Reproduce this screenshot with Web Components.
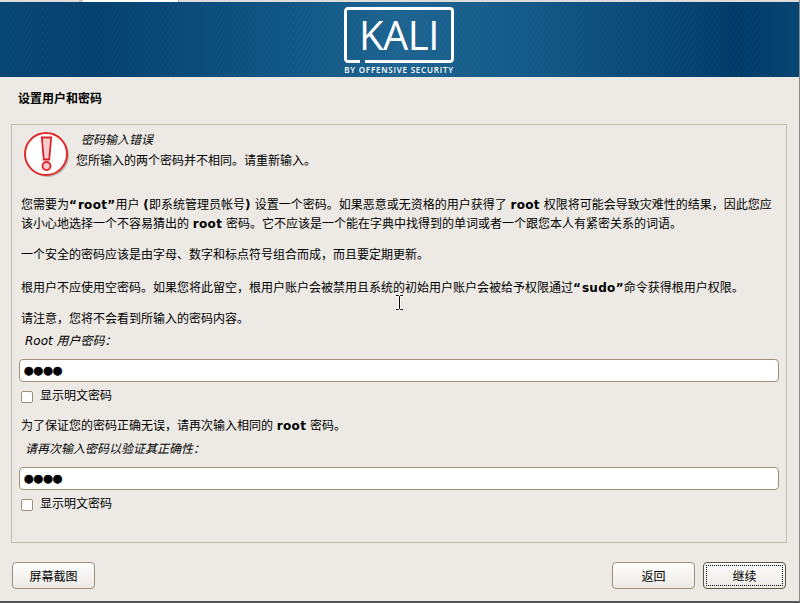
<!DOCTYPE html>
<html lang="zh">
<head>
<meta charset="utf-8">
<style>
  html, body { margin: 0; height: 100%; }
  body { overflow: hidden; font-family: "DejaVu Sans", "Noto Sans CJK SC", sans-serif; }
  b { letter-spacing: .3px; }
  b.open { letter-spacing: 1px; }
</style>
</head>
<body>
<kali-installer>
  <kali-banner slot="banner"></kali-banner>
  <span slot="title">设置用户和密码</span>

  <error-note heading="密码输入错误">您所输入的两个密码并不相同。请重新输入。</error-note>

  <info-text style="margin-top:14px">您需要为<b class="open">“</b><b>root”</b>用户 <b>(</b>即系统管理员帐号<b>)</b> 设置一个密码。如果恶意或无资格的用户获得了 <b>root</b> 权限将可能会导致灾难性的结果，因此您应该小心地选择一个不容易猜出的 <b>root</b> 密码。它不应该是一个能在字典中找得到的单词或者一个跟您本人有紧密关系的词语。</info-text>
  <info-text style="margin-top:12px">一个安全的密码应该是由字母、数字和标点符号组合而成，而且要定期更新。</info-text>
  <info-text style="margin-top:14px">根用户不应使用空密码。如果您将此留空，根用户账户会被禁用且系统的初始用户账户会被给予权限通过<b class="open">“</b><b>sudo”</b>命令获得根用户权限。</info-text>
  <info-text style="margin-top:12px">请注意，您将不会看到所输入的密码内容。</info-text>
  <password-field label="Root 用户密码：" style="margin-top:3px"></password-field>
  <info-text style="margin-top:12px">为了保证您的密码正确无误，请再次输入相同的 <b>root</b> 密码。</info-text>
  <password-field label="请再次输入密码以验证其正确性：" style="margin-top:4px"></password-field>

  <gtk-button slot="left">屏幕截图</gtk-button>
  <gtk-button slot="right">返回</gtk-button>
  <gtk-button slot="right" focused>继续</gtk-button>
</kali-installer>

<script>
class KaliInstaller extends HTMLElement {
  connectedCallback() {
    this.attachShadow({ mode: 'open' });
    this.shadowRoot.innerHTML = `
      <style>
        :host {
          display: flex;
          flex-direction: column;
          width: 800px;
          height: 603px;
          box-sizing: border-box;
          position: relative;
          background: #edeae5;
          color: #000;
          font-size: 12px;
          border-bottom: 2px solid #555;
          border-right: 1px solid #888;
        }
        .strip { height: 2px; background: #dfddd9; display: flex; flex: none; }
        .tab { margin-left: 79px; width: 100px; background: #fff; border-left: 4px solid #c4c4c4; border-right: 1px solid #aaa; box-sizing: border-box; }
        .title { font-weight: bold; height: 41px; padding-left: 18px; display: flex; align-items: center; flex: none; }
        .panel {
          margin: 6px 12px 0 11px;
          border: 1px solid #c4bcad;
          height: 419px;
          box-sizing: border-box;
          padding: 7px 8px 0 9px;
          flex: none;
        }
        .actions { flex: 1; display: flex; justify-content: space-between; align-items: flex-start; padding: 19px 13px 0 12px; }
        .group { display: flex; gap: 8px; }
      </style>
      <div class="strip"><div class="tab"></div></div>
      <slot name="banner"></slot>
      <div class="title"><slot name="title"></slot></div>
      <div class="panel"><slot></slot></div>
      <div class="actions">
        <div class="group"><slot name="left"></slot></div>
        <div class="group"><slot name="right"></slot></div>
      </div>
      <svg style="position:absolute;left:395px;top:295px" width="9" height="15" viewBox="0 0 9 15">
        <path d="M1 .5h2.500l1 1 1-1H8M4.500 1.500v12M1 14.500h2.500l1-1 1 1H8" fill="none" stroke="#fff" stroke-width="2.500"/>
        <path d="M1 .5h2.500l1 1 1-1H8M4.500 1.500v12M1 14.500h2.500l1-1 1 1H8" fill="none" stroke="#000" stroke-width="1"/>
      </svg>
    `;
  }
}

class KaliBanner extends HTMLElement {
  connectedCallback() {
    this.attachShadow({ mode: 'open' });
    this.shadowRoot.innerHTML = `
      <style>
        :host {
          display: flex;
          flex: none;
          height: 75px;
          justify-content: center;
          background:
            repeating-linear-gradient(120deg, rgba(255,255,255,.025) 0 1px, transparent 1px 4px),
            linear-gradient(90deg, #074573 0%, #044070 12%, #0f5583 35%, #1d6491 50%, #145a88 65%, #044070 88%, #003a68 92%, #064472 100%);
        }
        .logo {
          width: 110px;
          margin-left: -1px;
          display: flex;
          flex-direction: column;
          align-items: center;
          color: #fff;
          font-family: "Open Sans", "Liberation Sans", sans-serif;
        }
        .frame {
          position: relative;
          width: 110px;
          height: 56px;
          margin-top: 5px;
          display: flex;
          align-items: center;
          justify-content: center;
          font-size: 40px;
          line-height: 56px;
          letter-spacing: -.5px;
        }
        svg { position: absolute; left: 0; top: 0; }
        .sub { font-size: 8px; letter-spacing: .8px; line-height: 10px; white-space: nowrap; margin-top: 2px; font-weight: 600; }
      </style>
      <div class="logo">
        <div class="frame">
          <svg width="110" height="56" viewBox="0 0 110 56">
            <path d="M16 54.500H4A2.500 2.500 0 0 1 1.500 52V4A2.500 2.500 0 0 1 4 1.500h102a2.500 2.500 0 0 1 2.500 2.500v48a2.500 2.500 0 0 1-2.500 2.500H21" fill="none" stroke="#fff" stroke-width="3"/>
          </svg>
          <span>KALI</span>
        </div>
        <div class="sub">BY OFFENSIVE SECURITY</div>
      </div>
    `;
  }
}

class ErrorNote extends HTMLElement {
  connectedCallback() {
    this.attachShadow({ mode: 'open' });
    this.shadowRoot.innerHTML = `
      <style>
        :host { display: flex; gap: 5px; }
        svg { flex: none; display: block; }
        .head { font-style: italic; margin: -1px 0 0 5px; line-height: 19px; }
        .msg { margin-top: 2px; line-height: 19px; }
      </style>
      <svg width="50" height="50" viewBox="0 0 50 50">
        <circle cx="26.500" cy="23.500" r="21.500" fill="#777" opacity=".45"/>
        <circle cx="25" cy="22" r="21" fill="#fff" stroke="#e02b2b" stroke-width="2"/>
        <path d="M20.800 5.500h9.400l-2 22h-5.400z" fill="#f8cccc" stroke="#dc2228" stroke-width="1.800"/>
        <circle cx="25.500" cy="34" r="4" fill="#f8cccc" stroke="#dc2228" stroke-width="1.800"/>
      </svg>
      <div>
        <div class="head">${this.getAttribute('heading')}</div>
        <div class="msg"><slot></slot></div>
      </div>
    `;
  }
}

class InfoText extends HTMLElement {
  connectedCallback() {
    this.attachShadow({ mode: 'open' });
    this.shadowRoot.innerHTML = `
      <style>
        :host { display: block; line-height: 19px; width: 757px; }
      </style>
      <slot></slot>
    `;
  }
}

class PasswordField extends HTMLElement {
  connectedCallback() {
    this.attachShadow({ mode: 'open' });
    this.shadowRoot.innerHTML = `
      <style>
        :host { display: block; }
        .label { font-style: italic; padding-left: 4px; line-height: 19px; }
        .entry {
          margin: 8px -1px 0 -2px;
          height: 23px;
          box-sizing: border-box;
          background: #fff;
          border: 1px solid #9c9078;
          border-radius: 4px;
          padding-left: 4px;
          display: flex;
          align-items: center;
          font-size: 11px;
          color: #000;
          -webkit-text-stroke: .6px #000;
        }
        .check { display: flex; align-items: center; gap: 7px; margin-top: 7px; line-height: 14px; }
        .box { width: 10px; height: 10px; background: #fff; border: 1px solid #9c9078; border-radius: 2px; }
        .check span:last-child { margin-bottom: 2px; }
      </style>
      <div class="label">${this.getAttribute('label')}</div>
      <div class="entry">●●●●</div>
      <div class="check"><span class="box"></span><span>显示明文密码</span></div>
    `;
  }
}

class GtkButton extends HTMLElement {
  connectedCallback() {
    this.attachShadow({ mode: 'open' });
    this.shadowRoot.innerHTML = `
      <style>
        :host {
          display: flex;
          width: 83px;
          height: 27px;
          box-sizing: border-box;
          border: 1px solid #9c9078;
          border-radius: 4px;
          background: linear-gradient(#fefefd, #edeae5);
          align-items: center;
          justify-content: center;
          position: relative;
        }
        :host([focused]) { border-color: #5a5346; }
        :host([focused])::after {
          content: '';
          position: absolute;
          inset: 2px;
          border: 1px dotted #000;
        }
      </style>
      <slot></slot>
    `;
  }
}

customElements.define('kali-installer', KaliInstaller);
customElements.define('kali-banner', KaliBanner);
customElements.define('error-note', ErrorNote);
customElements.define('info-text', InfoText);
customElements.define('password-field', PasswordField);
customElements.define('gtk-button', GtkButton);
</script>
</body>
</html>
